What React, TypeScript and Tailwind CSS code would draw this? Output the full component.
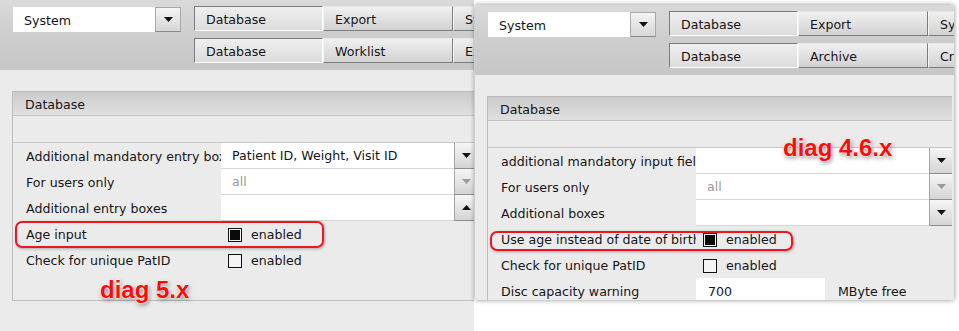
import type { ReactNode } from "react";

const font = "font-['DejaVu_Sans',Verdana,sans-serif] text-[12.6px] text-[#161616]";

function Arrow({ up = false, muted = false }: { up?: boolean; muted?: boolean }) {
  return (
    <svg width="9" height="5" viewBox="0 0 9 5">
      <polygon
        points={up ? "0,5 9,5 4.5,0" : "0,0 9,0 4.5,5"}
        fill={muted ? "#9a9a9a" : "#111"}
      />
    </svg>
  );
}

function DropButton({ up, muted }: { up?: boolean; muted?: boolean }) {
  return (
    <div className="flex h-[26px] w-[23px] shrink-0 items-center justify-center border-l border-b border-l-[#a4a4a4] border-b-[#8e8e8e] bg-gradient-to-b from-[#f6f6f6] to-[#d4d4d4]">
      <Arrow up={up} muted={muted} />
    </div>
  );
}

function Tab({ label, active }: { label: string; active?: boolean }) {
  return (
    <div
      className={
        active
          ? "flex h-[25px] w-[129px] shrink-0 items-center border border-t-[#7c7c7c] border-l-[#7c7c7c] border-r-white border-b-white bg-gradient-to-b from-[#efefef] to-[#dcdcdc] pl-[11px] pt-[3px]"
          : "flex h-[25px] w-[130px] shrink-0 items-center border border-t-[#e6e6e6] border-l-[#f4f4f4] border-r-[#7c7c7c] border-b-[#7c7c7c] bg-gradient-to-b from-[#f0f0f0] to-[#d2d2d2] pl-[11px] pt-[3px]"
      }
    >
      {label}
    </div>
  );
}

function Header({ tabs1, tabs2 }: { tabs1: string[]; tabs2: string[] }) {
  return (
    <div className="flex h-[70px] shrink-0 bg-gradient-to-b from-[#dadada] via-[#cdcdcd] to-[#c7c7c7] pl-[13px] pt-[6px]">
      <div className="mt-px flex h-[25px]">
        <div className="flex w-[142px] items-center bg-white pl-[11px] pt-[3px]">System</div>
        <div className="flex w-[26px] items-center justify-center border border-[#a8a8a8] border-b-[#8a8a8a] bg-gradient-to-b from-[#f4f4f4] to-[#d6d6d6]">
          <Arrow />
        </div>
      </div>
      <div className="ml-[13px] flex flex-col gap-[7px]">
        <div className="flex">
          <Tab label={tabs1[0]} active />
          <Tab label={tabs1[1]} />
          <Tab label={tabs1[2]} />
        </div>
        <div className="flex">
          <Tab label={tabs2[0]} active />
          <Tab label={tabs2[1]} />
          <Tab label={tabs2[2]} />
        </div>
      </div>
    </div>
  );
}

function Row({ label, children }: { label: string; children: ReactNode }) {
  return (
    <div className="flex h-[26px] items-center">
      <div className="w-[208px] shrink-0 overflow-hidden whitespace-nowrap pl-[13px] pt-[2px]">{label}</div>
      {children}
    </div>
  );
}

function SelectCell({ value, muted, up }: { value?: string; muted?: boolean; up?: boolean }) {
  return (
    <div className="flex h-[26px] items-stretch">
      <div
        className={`flex w-[233px] items-center border-b border-[#d6d6d6] bg-white pl-[11px] pt-[2px] ${
          muted ? "text-[#9a9a9a]" : ""
        }`}
      >
        {value}
      </div>
      <DropButton up={up} muted={muted} />
    </div>
  );
}

function Check({ checked }: { checked?: boolean }) {
  return (
    <div className="ml-[7px] flex items-center gap-[9px] pt-[2px]">
      <span className="flex h-[14px] w-[14px] items-center justify-center border border-[#111] bg-[#f4f4f4]">
        {checked && <span className="h-[10px] w-[10px] bg-[#0a0a0a]" />}
      </span>
      <span>enabled</span>
    </div>
  );
}

function Panel({ children, className = "" }: { children: ReactNode; className?: string }) {
  return (
    <div className={`ml-[12px] mt-[21px] flex w-[465px] shrink-0 flex-col border-l border-[#bdbdbd] ${className}`}>
      <div className="flex h-[25px] shrink-0 items-center border-t border-b border-t-[#b9b9b9] border-b-[#c2c2c2] bg-gradient-to-b from-[#cbcbcb] to-[#e0e0e0] pl-[12px] pt-[3px]">
        Database
      </div>
      <div className="h-[27px] shrink-0 border-b border-[#c6c6c6]" />
      {children}
    </div>
  );
}

function Highlight({ className }: { className: string }) {
  return (
    <div
      className={`absolute rounded-[7px] border-2 border-[#f0141e] shadow-[1px_1px_3px_rgba(0,0,0,0.3)] ${className}`}
    />
  );
}

function DiagLabel({ text, className }: { text: string; className: string }) {
  return (
    <div
      className={`absolute font-['Liberation_Sans',Arial,sans-serif] text-[24px] leading-[24px] font-bold text-[#ff0a0a] [text-shadow:0_0_1px_#fff,0_0_2px_#fff,0_0_2px_#fff,1px_2px_4px_rgba(0,0,0,0.5)] ${className}`}
    >
      {text}
    </div>
  );
}

export default function App() {
  return (
    <div className={`flex h-[331px] w-[959px] overflow-hidden bg-white ${font}`}>
      {/* diag 5.x */}
      <div className="relative flex h-[331px] w-[474px] shrink-0 flex-col overflow-hidden bg-[#ebebeb]">
        <Header tabs1={["Database", "Export", "System"]} tabs2={["Database", "Worklist", "Export"]} />
        <Panel className="h-[210px] border-b">
          <Row label="Additional mandatory entry boxes">
            <SelectCell value="Patient ID, Weight, Visit ID" />
          </Row>
          <Row label="For users only">
            <SelectCell value="all" muted />
          </Row>
          <Row label="Additional entry boxes">
            <SelectCell up />
          </Row>
          <Row label="Age input">
            <Check checked />
          </Row>
          <Row label="Check for unique PatID">
            <Check />
          </Row>
        </Panel>
        <Highlight className="left-[15px] top-[221px] h-[27px] w-[309px]" />
        <DiagLabel text="diag 5.x" className="left-[100px] top-[278px]" />
      </div>

      {/* diag 4.6.x */}
      <div className="relative ml-px mt-[5px] flex h-[295px] w-[479px] shrink-0 flex-col overflow-hidden bg-[#ebebeb] shadow-[0_0_5px_rgba(0,0,0,0.45)]">
        <Header tabs1={["Database", "Export", "System"]} tabs2={["Database", "Archive", "Create"]} />
        <Panel>
          <Row label="additional mandatory input fields">
            <SelectCell />
          </Row>
          <Row label="For users only">
            <SelectCell value="all" muted />
          </Row>
          <Row label="Additional boxes">
            <SelectCell />
          </Row>
          <Row label="Use age instead of date of birth">
            <Check checked />
          </Row>
          <Row label="Check for unique PatID">
            <Check />
          </Row>
          <Row label="Disc capacity warning">
            <div className="flex h-[26px] w-[129px] items-center bg-white pl-[12px] pt-[2px]">700</div>
            <span className="ml-[13px] pt-[2px]">MByte free</span>
          </Row>
        </Panel>
        <Highlight className="left-[15px] top-[226px] h-[20px] w-[303px]" />
        <DiagLabel text="diag 4.6.x" className="left-[308px] top-[131px]" />
      </div>
    </div>
  );
}
